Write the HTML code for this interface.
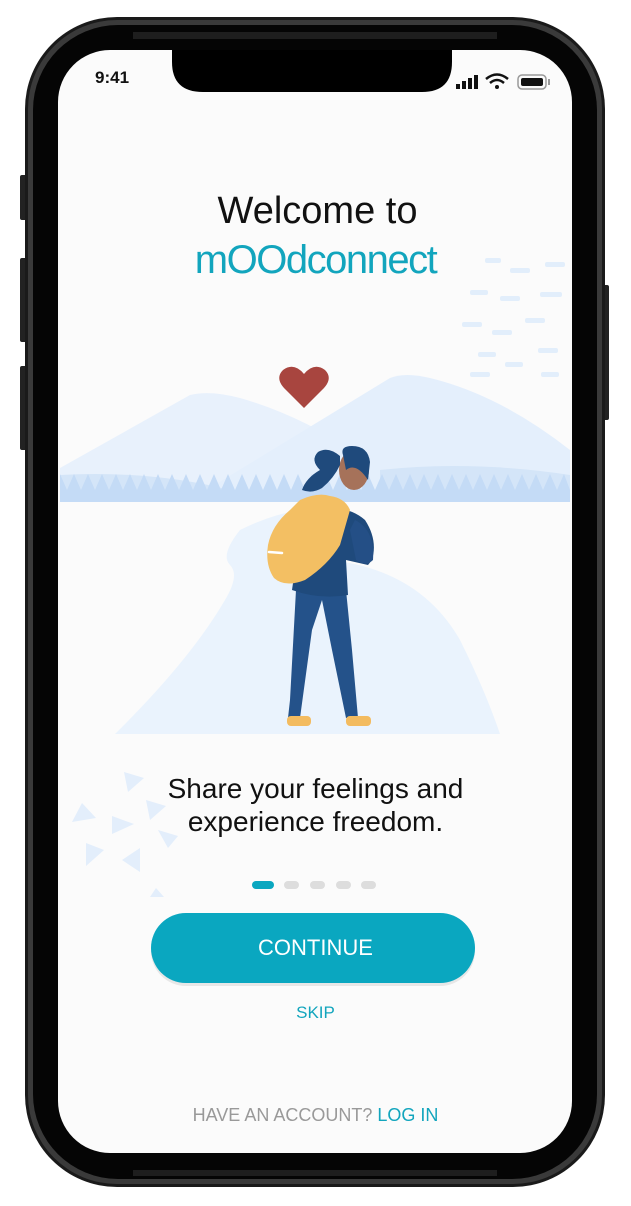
<!DOCTYPE html>
<html><head><meta charset="utf-8"><style>
html,body{margin:0;padding:0;width:631px;height:1206px;background:#fff;overflow:hidden;font-family:"Liberation Sans",sans-serif}
.t{position:absolute;left:0;width:631px;text-align:center;white-space:nowrap}
svg{position:absolute;left:0;top:0}
</style></head><body>
<svg width="631" height="1206" viewBox="0 0 631 1206">
<rect x="20" y="175" width="8" height="45" rx="2" fill="#222"/>
<rect x="20" y="258" width="8" height="84" rx="2" fill="#222"/>
<rect x="20" y="366" width="8" height="84" rx="2" fill="#222"/>
<rect x="601" y="285" width="8" height="135" rx="2" fill="#222"/>
<rect x="25" y="17" width="580" height="1170" rx="92" fill="#1a1a1a"/>
<rect x="28" y="20" width="574" height="1164" rx="89" fill="#3a3a3a"/>
<rect x="33" y="25" width="564" height="1154" rx="85" fill="#050505"/>
<rect x="133" y="32" width="364" height="7" fill="#1e1e1e"/>
<rect x="133" y="1170" width="364" height="6" fill="#1e1e1e"/>
<rect x="58" y="50" width="514" height="1103" rx="52" fill="#fbfbfb"/>
<path d="M172 50 H452 V62 Q452 92 422 92 H203 Q172 92 172 62 Z" fill="#000"/>
<rect x="456" y="84" width="4" height="5" fill="#111"/><rect x="462" y="81" width="4" height="8" fill="#111"/><rect x="468" y="78" width="4" height="11" fill="#111"/><rect x="474" y="75" width="4" height="14" fill="#111"/>
<path d="M486 79 Q497 70 508 79" stroke="#111" stroke-width="2.5" fill="none"/><path d="M490 83 Q497 77 504 83" stroke="#111" stroke-width="2.5" fill="none"/><circle cx="497" cy="87" r="2" fill="#111"/>
<rect x="518" y="75" width="28" height="14" rx="4" fill="none" stroke="#999" stroke-width="1.5"/><rect x="521" y="78" width="22" height="8" rx="2" fill="#111"/><rect x="548" y="79" width="2" height="6" fill="#999"/>
<g fill="#e2eefb">
<rect x="485" y="258" width="16" height="5" rx="2"/><rect x="510" y="268" width="20" height="5" rx="2"/><rect x="545" y="262" width="20" height="5" rx="2"/>
<rect x="470" y="290" width="18" height="5" rx="2"/><rect x="500" y="296" width="20" height="5" rx="2"/><rect x="540" y="292" width="22" height="5" rx="2"/>
<rect x="462" y="322" width="20" height="5" rx="2"/><rect x="492" y="330" width="20" height="5" rx="2"/><rect x="525" y="318" width="20" height="5" rx="2"/>
<rect x="478" y="352" width="18" height="5" rx="2"/><rect x="505" y="362" width="18" height="5" rx="2"/><rect x="538" y="348" width="20" height="5" rx="2"/><rect x="470" y="372" width="20" height="5" rx="2"/><rect x="541" y="372" width="18" height="5" rx="2"/>
</g>
<path d="M60 468 L190 395 Q210 390 240 398 Q300 415 360 455 L360 500 H60Z" fill="#e8f1fc"/>
<path d="M190 500 L390 378 Q405 372 430 378 Q500 395 570 450 V500Z" fill="#e4effc"/>
<path d="M60 475 Q150 470 230 490 L250 500 H60Z" fill="#d4e5f8"/>
<path d="M380 470 Q470 460 570 475 V500 H380Z" fill="#d4e5f8"/>
<path d="M60 500 V474 L67 490 L74 474 L81 490 L88 474 L95 490 L102 474 L109 490 L116 474 L123 490 L130 474 L137 490 L144 474 L151 490 L158 474 L165 490 L172 474 L179 490 L186 474 L193 490 L200 474 L207 490 L214 474 L221 490 L228 474 L235 490 L242 474 L249 490 L256 474 L263 490 L270 474 L277 490 L284 474 L291 490 L298 474 L305 490 L312 474 L319 490 L326 474 L333 490 L340 474 L347 490 L354 474 L361 490 L368 474 L375 490 L382 474 L389 490 L396 474 L403 490 L410 474 L417 490 L424 474 L431 490 L438 474 L445 490 L452 474 L459 490 L466 474 L473 490 L480 474 L487 490 L494 474 L501 490 L508 474 L515 490 L522 474 L529 490 L536 474 L543 490 L550 474 L557 490 L564 474 L570 490 V502 H60Z" fill="#c4dbf6"/>
<path d="M115 734 Q190 660 225 600 Q240 575 230 565 Q220 555 240 530 Q270 515 300 510 L330 560 Q420 570 460 640 Q485 690 500 734Z" fill="#eaf3fd"/>
<path d="M304 408 L284 388 Q275 378 283 370 Q294 362 304 374 Q314 362 325 370 Q333 378 324 388Z" fill="#a8453f"/>
<path d="M296 590 L290 700 L288 718 L300 718 L312 630 L322 600 L332 650 L346 718 L358 718 L352 650 L346 590Z" fill="#24528a"/>
<rect x="287" y="716" width="24" height="10" rx="4" fill="#f3bb5f"/>
<rect x="346" y="716" width="25" height="10" rx="4" fill="#f3bb5f"/>
<path d="M318 508 Q348 505 365 520 Q378 540 372 560 L368 565 L346 560 L348 595 Q320 600 292 590 L300 535Z" fill="#1f4a7c"/>
<path d="M355 520 Q375 530 373 560 Q366 567 356 560 L350 530Z" fill="#244f86"/>
<ellipse cx="354" cy="470" rx="15" ry="20" fill="#a6725a"/>
<path d="M343 455 Q340 446 352 446 Q368 446 370 462 L368 480 Q356 462 346 470Z" fill="#1f4a7c"/>
<path d="M340 456 Q328 446 318 452 Q310 460 320 470 Q306 478 302 490 Q312 494 322 488 Q334 478 340 465Z" fill="#1f4a7c"/>
<path d="M300 500 Q318 492 330 496 Q345 498 350 510 L340 545 Q328 565 305 580 Q285 588 274 578 Q265 565 268 545 Q272 525 290 510Z" fill="#f3bf63"/>
<path d="M269 552 L282 553" stroke="#fff" stroke-width="2.5" stroke-linecap="round"/>
<g fill="#e3eefb">
<path d="M124 772 L144 778 L128 792Z"/><path d="M82 803 L96 818 L72 822Z"/><path d="M112 816 L134 824 L112 834Z"/><path d="M146 800 L166 806 L150 820Z"/><path d="M86 843 L104 850 L86 866Z"/><path d="M140 848 L140 872 L122 860Z"/><path d="M158 830 L178 836 L168 848Z"/><path d="M156 888 L164 897 L150 897Z"/>
</g>
<rect x="252" y="881" width="22" height="8" rx="4" fill="#0aa7c0"/>
<rect x="284" y="881" width="15" height="8" rx="4" fill="#ddd"/>
<rect x="310" y="881" width="15" height="8" rx="4" fill="#ddd"/>
<rect x="336" y="881" width="15" height="8" rx="4" fill="#ddd"/>
<rect x="361" y="881" width="15" height="8" rx="4" fill="#ddd"/>
<rect x="151" y="916" width="324" height="70" rx="35" fill="#000" opacity="0.08"/>
<rect x="151" y="913" width="324" height="70" rx="35" fill="#0aa7c0"/>
</svg>
<div class="t" style="top:68px;left:95px;width:60px;text-align:left;font-size:17px;font-weight:bold;color:#111">9:41</div>
<div class="t" style="top:190px;font-size:38px;color:#111;left:2px">Welcome to</div>
<div class="t" style="top:238px;font-size:40px;color:#12a5bd;letter-spacing:-1.5px;left:0px">mOOdconnect</div>
<div class="t" style="top:772px;font-size:28px;color:#111;line-height:33px">Share your feelings and<br>experience freedom.</div>
<div class="t" style="top:935px;font-size:22px;color:#fff">CONTINUE</div>
<div class="t" style="top:1003px;font-size:17px;color:#12a5bd">SKIP</div>
<div class="t" style="top:1105px;font-size:18px;color:#999">HAVE AN ACCOUNT? <span style="color:#12a5bd">LOG IN</span></div>
</body></html>
